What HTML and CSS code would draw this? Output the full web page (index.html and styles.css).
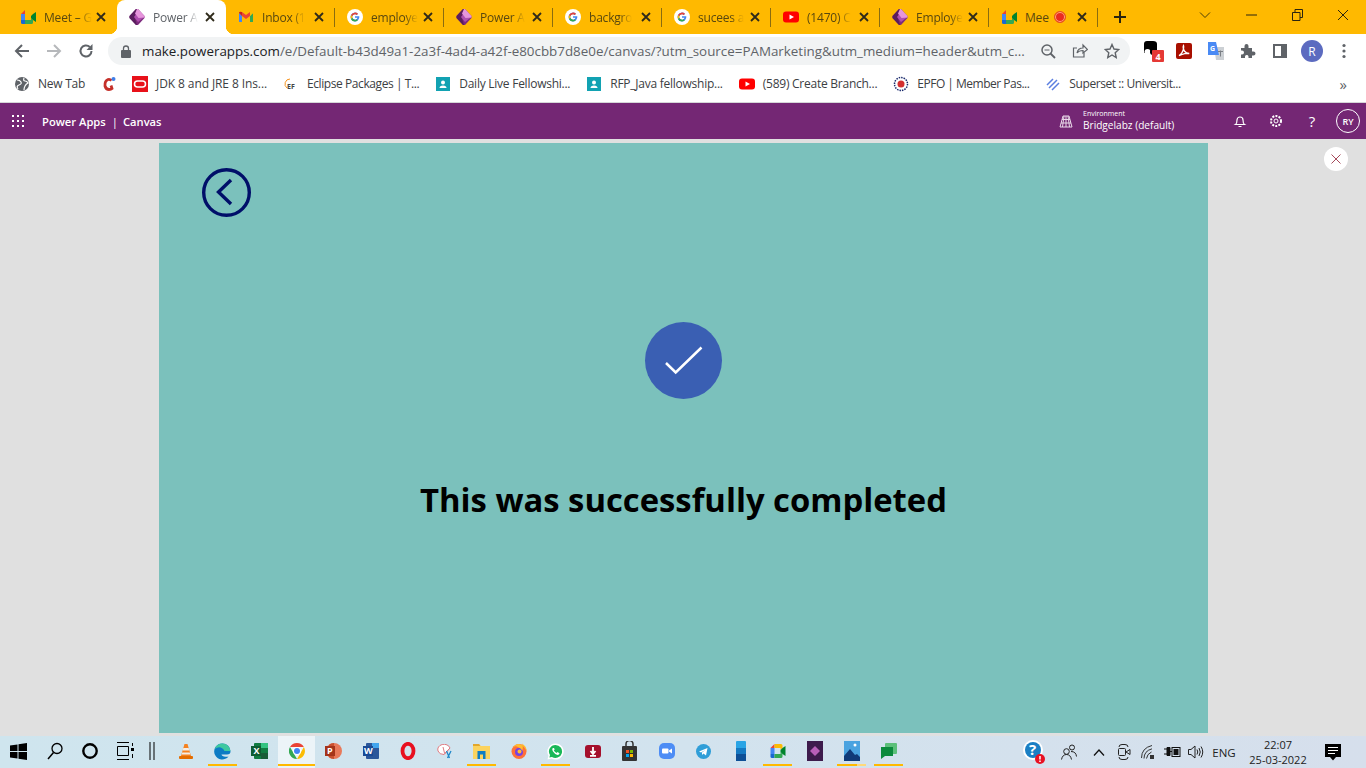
FILE: index.html
```html
<!DOCTYPE html>
<html lang="en">
<head>
<meta charset="utf-8">
<title>Power Apps</title>
<link rel="stylesheet" href="styles.css">
</head>
<body>
<svg class="defs" width="0" height="0">
  <symbol id="meet" viewBox="0 0 16 16"><path d="M1 5 5 1v4z" fill="#ea4335"/><path d="M1 5h4v6H1z" fill="#4285f4"/><path d="M1 11h4v4H2.500Q1 15 1 13.500z" fill="#1967d2"/><path d="M5 1h6.500Q13 1 13 2.500V5L11 7V5H5z" fill="#fbbc04"/><path d="M5 11h6V9l2 2v2.500Q13 15 11.500 15H5z" fill="#34a853"/><path d="M11 7l2-2 3-2v10l-3-2-2-2z" fill="#00832d"/></symbol>
  <symbol id="pa" viewBox="0 0 16 16"><path d="M7 0h2l6.500 7v2L9 16H7L.500 9V7z" fill="#7d2b7d"/><path d="M.500 7 7 0h1L5.500 8 8 16H7L.500 9z" fill="#5a1e5e"/><path d="M5 8 9 3l6.500 5L9 13z" fill="#b04fb0"/><path d="M8 0h1l6.500 7v1.500L9.500 9 6 4.500z" fill="#e695dc"/></symbol>
  <symbol id="gmail" viewBox="0 0 16 16"><path d="M1 4v9h3V7z" fill="#4285f4"/><path d="M12 7v6h3V4z" fill="#34a853"/><path d="M12 3v4l3-3q0-2-3-1z" fill="#fbbc04"/><path d="M4 3v4l4 3 4-3V3L8 6z" fill="#ea4335"/><path d="M1 4q0-2 3-1v4z" fill="#c5221f"/></symbol>
  <symbol id="g" viewBox="0 0 16 16"><circle cx="8" cy="8" r="8" fill="#fff"/><path d="M8 7.200h4.300A4.400 4.400 0 1 1 11 4.800L9.800 6A2.700 2.700 0 1 0 10.500 8.700H8z" fill="#4285f4"/><path d="M3.900 6.300A4.400 4.400 0 0 1 11 4.800L9.800 6A2.700 2.700 0 0 0 5.500 7z" fill="#ea4335"/><path d="M3.900 6.300 5.500 7a2.700 2.700 0 0 0 0 2L3.900 9.900a4.400 4.400 0 0 1 0-3.600z" fill="#fbbc04"/><path d="M3.900 9.900 5.500 9A2.700 2.700 0 0 0 9.600 10.200l1.300 1.100A4.400 4.400 0 0 1 3.900 9.900z" fill="#34a853"/></symbol>
  <symbol id="yt" viewBox="0 0 16 16"><rect y="2.500" width="16" height="11" rx="3" fill="#f00"/><path d="M6.500 5.500 11 8l-4.500 2.500z" fill="#fff"/></symbol>
  <symbol id="class" viewBox="0 0 16 16"><rect x="1" y="1" width="14" height="14" fill="#12a2b2"/><circle cx="8" cy="6.500" r="2" fill="#fff"/><path d="M4.500 12q0-2.500 3.500-2.500t3.500 2.500z" fill="#fff"/></symbol>
  <symbol id="tabx" viewBox="0 0 10 10"><path d="M1 1l8 8M9 1 1 9" stroke="#2f2a1a" stroke-width="1.800"/></symbol>
</svg>

<div class="tabstrip">
  <div class="tab"><svg class="ico"><use href="#meet"/></svg><span class="tab-title">Meet – G</span><span class="tab-x"><svg width="10" height="10"><use href="#tabx"/></svg></span></div>
  <div class="tab active"><svg class="ico"><use href="#pa"/></svg><span class="tab-title">Power A</span><span class="tab-x"><svg width="10" height="10"><use href="#tabx"/></svg></span></div>
  <div class="tab sep"><svg class="ico"><use href="#gmail"/></svg><span class="tab-title">Inbox (1</span><span class="tab-x"><svg width="10" height="10"><use href="#tabx"/></svg></span></div>
  <div class="tab sep"><svg class="ico"><use href="#g"/></svg><span class="tab-title">employe</span><span class="tab-x"><svg width="10" height="10"><use href="#tabx"/></svg></span></div>
  <div class="tab sep"><svg class="ico"><use href="#pa"/></svg><span class="tab-title">Power A</span><span class="tab-x"><svg width="10" height="10"><use href="#tabx"/></svg></span></div>
  <div class="tab sep"><svg class="ico"><use href="#g"/></svg><span class="tab-title">backgro</span><span class="tab-x"><svg width="10" height="10"><use href="#tabx"/></svg></span></div>
  <div class="tab sep"><svg class="ico"><use href="#g"/></svg><span class="tab-title">sucees a</span><span class="tab-x"><svg width="10" height="10"><use href="#tabx"/></svg></span></div>
  <div class="tab sep"><svg class="ico"><use href="#yt"/></svg><span class="tab-title">(1470) C</span><span class="tab-x"><svg width="10" height="10"><use href="#tabx"/></svg></span></div>
  <div class="tab sep"><svg class="ico"><use href="#pa"/></svg><span class="tab-title">Employe</span><span class="tab-x"><svg width="10" height="10"><use href="#tabx"/></svg></span></div>
  <div class="tab sep"><svg class="ico"><use href="#meet"/></svg><span class="tab-title short">Mee</span><span class="rec"></span><span class="tab-x"><svg width="10" height="10"><use href="#tabx"/></svg></span></div>
  <div class="newtab"><svg width="14" height="14" viewBox="0 0 14 14"><path d="M7 1v12M1 7h12" stroke="#2a2410" stroke-width="2"/></svg></div>
  <div class="winctl">
    <span class="winbtn"><svg width="12" height="8" viewBox="0 0 12 8"><path d="M1 1.500 6 6.500l5-5" fill="none" stroke="#4a3c08"/></svg></span>
    <span class="winbtn"><svg width="11" height="2" viewBox="0 0 11 2"><path d="M0 1h11" stroke="#2a2410"/></svg></span>
    <span class="winbtn"><svg width="11" height="12" viewBox="0 0 11 12"><path d="M.5 3.500h7.500v8H.5zM3 3.500V.5h7.500v8H8" fill="none" stroke="#2a2410"/></svg></span>
    <span class="winbtn"><svg width="12" height="12" viewBox="0 0 12 12"><path d="M1 1l10 10M11 1 1 11" stroke="#2a2410"/></svg></span>
  </div>
</div>

<div class="toolbar">
  <span class="navbtn"><svg width="16" height="16" viewBox="0 0 16 16"><path d="M15 8H2M8 2 2 8l6 6" fill="none" stroke="#5f6368" stroke-width="2"/></svg></span>
  <span class="navbtn"><svg width="16" height="16" viewBox="0 0 16 16"><path d="M1 8h13M8 2l6 6-6 6" fill="none" stroke="#b6b8bb" stroke-width="2"/></svg></span>
  <span class="navbtn"><svg width="16" height="16" viewBox="0 0 16 16"><path d="M13.500 8A5.500 5.500 0 1 1 11.800 4" fill="none" stroke="#5f6368" stroke-width="2"/><path d="M14.500 1v6h-6z" fill="#5f6368"/></svg></span>
  <div class="omnibox">
    <svg class="lock" width="10" height="13" viewBox="0 0 10 13"><path d="M2.500 5V3.500a2.500 2.500 0 0 1 5 0V5" fill="none" stroke="#5f6368" stroke-width="1.300"/><rect y="5" width="10" height="8" rx="1" fill="#5f6368"/></svg>
    <span class="url"><span class="host">make.powerapps.com</span>/e/Default-b43d49a1-2a3f-4ad4-a42f-e80cbb7d8e0e/canvas/?utm_source=PAMarketing&amp;utm_medium=header&amp;utm_c...</span>
    <span class="omni-ico"><svg width="16" height="16" viewBox="0 0 16 16"><circle cx="7" cy="7" r="5" fill="none" stroke="#5f6368" stroke-width="1.500"/><path d="M10.500 10.500 15 15" stroke="#5f6368" stroke-width="1.800"/><path d="M4.500 7h5" stroke="#5f6368"/></svg></span>
    <span class="omni-ico"><svg width="16" height="16" viewBox="0 0 16 16"><path d="M12 9.500V14H1.500V5H5" fill="none" stroke="#5f6368" stroke-width="1.200"/><path d="M5 10q1-5 6-5V2l4.500 4.500L11 10V7.500Q7 7.500 5 10z" fill="none" stroke="#5f6368" stroke-width="1.200"/></svg></span>
    <span class="omni-ico"><svg width="16" height="16" viewBox="0 0 16 16"><path d="M8 1.500 10 6l4.800.5-3.600 3.200 1 4.800L8 12l-4.200 2.500 1-4.800L1.200 6.500 6 6z" fill="none" stroke="#5f6368" stroke-width="1.400"/></svg></span>
  </div>
  <div class="exts">
    <span class="ext"><svg class="ext-first" width="22" height="24" viewBox="0 0 22 24"><path d="M1 5q0-3 3-3h6q4 0 4 3v9H1z" fill="#000"/><circle cx="4.500" cy="13" r="3" fill="#fff"/><circle cx="10" cy="13" r="3" fill="#000"/><rect x="9" y="11" width="12" height="12" rx="1" fill="#e53935"/><text class="badge-n" x="15" y="21">4</text></svg></span>
    <span class="ext"><svg width="16" height="16" viewBox="0 0 16 16"><rect width="16" height="16" rx="2" fill="#a80f00"/><path d="M3 12.500q3-1.500 4.500-6.500.4-2.500 0-3.500-1 2 .8 5.500 2 2.500 5 2.500-4-.3-7.300 1-2 .8-3 1z" fill="none" stroke="#fff" stroke-width="1.300"/></svg></span>
    <span class="ext"><svg width="18" height="18" viewBox="0 0 18 18"><path d="M7 5h10v13H9z" fill="#ccd0d4"/><path d="M1 0h8l3 13H1z" fill="#4a8af4"/><text class="gt" x="3" y="9">G</text><path d="M11 9.500h5M13.500 8.500v6" stroke="#7a7f85"/></svg></span>
    <span class="ext"><svg width="16" height="16" viewBox="0 0 16 16"><path d="M1 5h3.500V3a2 2 0 0 1 4 0v2H12v3.500h1.500a2 2 0 0 1 0 4H12V15H8.500v-1.500a1.800 1.800 0 0 0-3.500 0V15H1v-3.500h1a2 2 0 0 0 0-4H1z" fill="#5f6368"/></svg></span>
    <span class="ext"><svg width="14" height="14" viewBox="0 0 14 14"><path d="M1 1h12v12H1z" fill="none" stroke="#5f6368" stroke-width="2"/><path d="M8 1h5v12H8z" fill="#5f6368"/></svg></span>
    <span class="ext"><span class="avatar">R</span></span>
    <span class="ext"><svg width="4" height="16" viewBox="0 0 4 16"><circle cx="2" cy="2.500" r="1.600" fill="#5f6368"/><circle cx="2" cy="8" r="1.600" fill="#5f6368"/><circle cx="2" cy="13.500" r="1.600" fill="#5f6368"/></svg></span>
  </div>
</div>

<div class="bookmarks">
  <span class="bm"><svg class="ico"><circle cx="8" cy="8" r="7" fill="#5f6368"/><path d="M3 4q3 0 4 2t-2 3-1 4M10 2q-1 3 1 3t3 2q-2 1-3 3t-1 4" fill="none" stroke="#fff" stroke-width="1.200"/></svg><span class="bm-text">New Tab</span></span>
  <span class="bm"><svg class="ico"><path d="M10.500 4.500Q9 3 7 3.500 3.500 5 4 10q1 3.500 4 3.500 2 0 3-1l-1-3" fill="none" stroke="#c5302a" stroke-width="2.800"/><circle cx="12.500" cy="3" r="2" fill="#3f7fe8"/></svg></span>
  <span class="bm tight"><svg class="ico"><rect width="16" height="16" fill="#e8111a"/><rect x="2.500" y="5" width="11" height="6" rx="3" fill="none" stroke="#fff" stroke-width="1.500"/></svg><span class="bm-text wide">JDK 8 and JRE 8 Ins...</span></span>
  <span class="bm"><svg class="ico"><path d="M7 3A5 5 0 0 0 4 12" fill="none" stroke="#f7941e"/><text class="ef" x="4" y="13">EF</text></svg><span class="bm-text narrow">Eclipse Packages | T...</span></span>
  <span class="bm"><svg class="ico"><use href="#class"/></svg><span class="bm-text">Daily Live Fellowshi...</span></span>
  <span class="bm"><svg class="ico"><use href="#class"/></svg><span class="bm-text">RFP_Java fellowship...</span></span>
  <span class="bm"><svg class="ico"><use href="#yt"/></svg><span class="bm-text">(589) Create Branch...</span></span>
  <span class="bm"><svg class="ico"><circle cx="8" cy="8" r="6.500" fill="#fff" stroke="#1a2a6c" stroke-width="1.500" stroke-dasharray="1.500 1"/><circle cx="8" cy="8" r="3.500" fill="#d32f2f"/></svg><span class="bm-text narrower">EPFO | Member Pas...</span></span>
  <span class="bm"><svg class="ico"><path d="M2 9 8 3M4 12l8-8M7 14l7-7" fill="none" stroke="#5b7fe0" stroke-width="1.500"/></svg><span class="bm-text narrow">Superset :: Universit...</span></span>
  <span class="bm-more">»</span>
</div>

<header class="appbar">
  <svg class="waffle" width="12" height="12" viewBox="0 0 12 12"><g fill="#fff"><rect width="2" height="2"/><rect x="5" width="2" height="2"/><rect x="10" width="2" height="2"/><rect y="5" width="2" height="2"/><rect x="5" y="5" width="2" height="2"/><rect x="10" y="5" width="2" height="2"/><rect y="10" width="2" height="2"/><rect x="5" y="10" width="2" height="2"/><rect x="10" y="10" width="2" height="2"/></g></svg>
  <span class="brand">Power Apps<span class="brand-sep">|</span>Canvas</span>
  <svg class="env-ico" width="14" height="14" viewBox="0 0 14 14"><path d="M1 13 4 2h6l3 11zM2 9h10M3 5.500h8M7 2v11M5 2l-1.500 11M9 2l1.500 11" fill="none" stroke="#e9d9e9"/></svg>
  <div class="env"><span class="env-label">Environment</span><span class="env-name">Bridgelabz (default)</span></div>
  <span class="app-ico"><svg width="14" height="14" viewBox="0 0 14 14"><path d="M2.500 10.500q1.500-1 1.500-4.500a3 3 0 0 1 6 0q0 3.500 1.500 4.500zM5.500 12.500h3" fill="none" stroke="#fff" stroke-width="1.200"/></svg></span>
  <span class="app-ico"><svg width="14" height="14" viewBox="0 0 14 14"><circle cx="7" cy="7" r="2" fill="none" stroke="#fff"/><circle cx="7" cy="7" r="5" fill="none" stroke="#fff" stroke-width="2" stroke-dasharray="2 1.200"/></svg></span>
  <span class="app-ico help">?</span>
  <span class="me">RY</span>
</header>

<main class="workspace">
  <section class="stage">
    <svg class="back" width="49" height="49" viewBox="0 0 49 49"><circle cx="24.500" cy="24.500" r="22.800" fill="none" stroke="#000f69" stroke-width="3.400"/><path d="M29 12 16.500 24 29 36" fill="none" stroke="#000f69" stroke-width="3.400"/></svg>
    <div class="check"><svg width="77" height="77" viewBox="0 0 77 77"><path d="M21 41 30.700 50.500 56.500 25.500" fill="none" stroke="#fff" stroke-width="2.500"/></svg></div>
    <h1 class="message">This was successfully completed</h1>
  </section>
  <button class="dismiss" type="button" aria-label="Close"><svg width="10" height="10" viewBox="0 0 10 10"><path d="M.5.500l9 9M9.500.500l-9 9" stroke="#a64a5a"/></svg></button>
</main>

<footer class="taskbar">
  <span class="tb w36"><svg width="17" height="17" viewBox="0 0 17 17"><path d="M0 2.500 7.500 1.400V8H0zM8.500 1.200 17 0v8H8.500zM0 9h7.500v6.600L0 14.500zM8.500 9H17v8l-8.500-1.200z" fill="#000"/></svg></span>
  <span class="tb w38"><svg width="16" height="18" viewBox="0 0 16 18"><circle cx="10" cy="6.500" r="5" fill="none" stroke="#000" stroke-width="1.300"/><path d="M6.500 10.500 1 17" stroke="#000" stroke-width="1.500"/></svg></span>
  <span class="tb w32"><svg width="16" height="16" viewBox="0 0 16 16"><circle cx="8" cy="8" r="6.700" fill="none" stroke="#000" stroke-width="2.400"/></svg></span>
  <span class="tb w38"><svg width="18" height="18" viewBox="0 0 18 18"><path d="M1 .500h12M1 17.500h12M1.500 4.500h11v9h-11z" fill="none" stroke="#000"/><rect x="15" y="6" width="3" height="3" fill="#000"/><path d="M16.500 1v3M16.500 12v4" stroke="#000"/></svg></span>
  <span class="tb w16"><svg width="6" height="18" viewBox="0 0 6 18"><path d="M1 0v18M5 0v18" stroke="#000"/></svg></span>
  <div class="pins">
    <span class="tb"><svg width="14" height="17" viewBox="0 0 14 17"><path d="M5.500 1h3l3.500 12H2z" fill="#f58220"/><path d="M4.300 5h5.400l.6 2.500H3.700zM3.200 9.500h7.600l.5 2H2.700z" fill="#f4ede4"/><rect y="13" width="14" height="3" rx="1" fill="#e36d00"/></svg></span>
    <span class="tb mark"><svg width="17" height="17" viewBox="0 0 17 17"><path d="M8.500.500a8 8 0 0 1 8 8q0 3-3.500 3H7.500q.5 2 4 2.300 2 .2 3-.4A8 8 0 1 1 8.500.500z" fill="#0c7bc4"/><path d="M16.500 8Q15 .5 8.500.5 2.500.5 .800 6q3-2.500 6-1.500 3 1 3.700 3.500z" fill="#3dc8a0"/></svg></span>
    <span class="tb"><svg width="17" height="16" viewBox="0 0 17 16"><rect x="3" width="14" height="16" rx="1" fill="#107c41"/><rect x="10" width="7" height="5" fill="#33c481"/><rect x="10" y="10" width="7" height="6" fill="#185c37"/><rect y="3" width="10" height="10" fill="#0e5c33"/><text class="xl" x="2.500" y="11">X</text></svg></span>
    <span class="tb current"><svg width="16" height="16" viewBox="0 0 16 16"><path d="M8 0a8 8 0 0 1 6.900 4H8z" fill="#ea4335"/><path d="M14.900 4A8 8 0 0 1 8 16l3.500-6z" fill="#fbbc04"/><path d="M8 16A8 8 0 0 1 1 4l3.500 6z" fill="#34a853"/><path d="M1 4a8 8 0 0 1 7-4v4z" fill="#ea4335"/><circle cx="8" cy="8" r="4" fill="#fff"/><circle cx="8" cy="8" r="3" fill="#4285f4"/></svg></span>
    <span class="tb"><svg width="17" height="16" viewBox="0 0 17 16"><circle cx="9" cy="8" r="8" fill="#e8795a"/><path d="M9 0a8 8 0 0 0-5 1.800V14.200A8 8 0 0 0 9 16z" fill="#c9502f"/><path d="M0 3h10v10H0z" fill="#a5341a"/><text class="xl" x="2" y="11">P</text></svg></span>
    <span class="tb"><svg width="16" height="16" viewBox="0 0 16 16"><rect x="3" width="13" height="16" rx="1" fill="#2b579a"/><rect x="9" width="7" height="5" fill="#41a5ee"/><rect y="3" width="10" height="10" fill="#1a4a94"/><text class="xl" x="1" y="11">W</text></svg></span>
    <span class="tb"><svg width="16" height="18" viewBox="0 0 16 18"><ellipse cx="8" cy="9" rx="5.500" ry="7.200" fill="none" stroke="#e8101f" stroke-width="3.800"/></svg></span>
    <span class="tb"><svg width="16" height="15" viewBox="0 0 16 15"><path d="M1 7a6 5 0 0 1 12-3L7 10.500A6 5 0 0 1 1 7z" fill="#fff" stroke="#e07a80"/><path d="M6 3l1.500 6M7 10.500 13 4" stroke="#e07a80" fill="none"/><path d="M9.500 7l3 7M14 7l-3.500 7" stroke="#1e88c9" stroke-width="1.300"/></svg></span>
    <span class="tb mark"><svg width="17" height="16" viewBox="0 0 17 16"><path d="M0 1h6l1.500 2H17v13H0z" fill="#fbd35e"/><path d="M0 1h6l1.500 2H0z" fill="#e2a72c"/><path d="M4.500 8h8v8h-2.500v-4.500H7V16H4.500z" fill="#0f7dc2"/></svg></span>
    <span class="tb"><svg width="16" height="16" viewBox="0 0 16 16"><circle cx="8" cy="8.500" r="7.500" fill="#ff7139"/><circle cx="8" cy="9" r="4" fill="#7542e5"/><circle cx="8.500" cy="8.500" r="2" fill="#ffbd2e"/><path d="M1.500 5Q4 2 7 4q3 1 4.500 4 1-4-.5-7.500 5 3 4.500 8Q13 2 8 1 4 1 1.500 5z" fill="#ffbd2e"/></svg></span>
    <span class="tb mark"><svg width="17" height="17" viewBox="0 0 17 17"><path d="M8.500 .500A8 8 0 0 0 1.500 12.500L.500 16.500l4.100-1.100A8 8 0 1 0 8.500 .500z" fill="#fff"/><path d="M8.500 2A6.500 6.500 0 0 0 3 12l-.6 2.500 2.500-.6A6.500 6.500 0 1 0 8.500 2z" fill="#19b858"/><path d="M6 5q-1.500 1 0 3.500 2 3 4.500 3.500 2 0 2-1.800L10.500 9 9.500 10Q7.500 9 6.800 7.300l1-1L6.800 5z" fill="#fff"/></svg></span>
    <span class="tb"><svg width="16" height="13" viewBox="0 0 16 13"><rect width="16" height="13" rx="3" fill="#a5102c"/><path d="M8 2v6M5.500 6 8 9l2.500-3M5 10.800h6" fill="none" stroke="#fff" stroke-width="1.800"/></svg></span>
    <span class="tb"><svg width="15" height="20" viewBox="0 0 15 20"><path d="M4 5V3a3.500 3.500 0 0 1 7 0v2" fill="none" stroke="#333" stroke-width="1.500"/><rect y="5" width="15" height="15" rx="1" fill="#333"/><rect x="4" y="9" width="3" height="3" fill="#f25022"/><rect x="8" y="9" width="3" height="3" fill="#7fba00"/><rect x="4" y="13" width="3" height="3" fill="#00a4ef"/><rect x="8" y="13" width="3" height="3" fill="#ffb900"/></svg></span>
    <span class="tb"><svg width="16" height="16" viewBox="0 0 16 16"><rect width="16" height="16" rx="5" fill="#4d8df5"/><rect x="3" y="5.500" width="6.500" height="5" rx="1" fill="#fff"/><path d="M10 7.500 13 5.500v5L10 8.500z" fill="#fff"/></svg></span>
    <span class="tb"><svg width="15" height="15" viewBox="0 0 15 15"><circle cx="7.500" cy="7.500" r="7.500" fill="#2f9ed8"/><path d="M3 7.500 11.500 4 10 11.500 7.500 9.500 6 11V8.500l3.500-2.500-4.500 2.500z" fill="#fff"/></svg></span>
    <span class="tb"><svg width="10" height="20" viewBox="0 0 10 20"><rect width="10" height="20" rx="1" fill="#29a4e5"/><rect y="7" width="10" height="6" fill="#1579c2"/><rect y="13" width="10" height="7" fill="#0d4f96"/></svg></span>
    <span class="tb mark"><svg width="17" height="16" viewBox="0 0 17 16"><use href="#meet"/></svg></span>
    <span class="tb"><svg width="16" height="20" viewBox="0 0 16 20"><rect width="16" height="20" fill="#3d1b4c"/><path d="M8 5l5 5-5 5-5-5z" fill="#b85fb8"/></svg></span>
    <span class="tb mark half"><svg width="16" height="20" viewBox="0 0 16 20"><rect width="16" height="20" fill="#4aa3e0"/><path d="M0 20V15l6-7 5 6 2-1 3 3v4z" fill="#103a78"/><circle cx="11" cy="4" r="1.500" fill="#fff"/></svg></span>
    <span class="tb mark"><svg width="16" height="16" viewBox="0 0 16 16"><rect x="4" width="12" height="11" rx="1" fill="#5cc07a"/><path d="M0 4h12v9H4l-4 3z" fill="#0b8a3c"/></svg></span>
  </div>
  <div class="tray">
    <span class="tr w36"><svg width="24" height="26" viewBox="0 0 24 26"><circle cx="11" cy="11" r="10" fill="#fff"/><circle cx="11" cy="11" r="8" fill="#1a7fc4"/><text class="q" x="7" y="16">?</text><circle cx="18" cy="20" r="5" fill="#e81123"/><path d="M18 17v3.500M18 21.500v1.500" stroke="#fff" stroke-width="1.500"/></svg></span>
    <span class="tr w34"><svg width="16" height="16" viewBox="0 0 16 16"><circle cx="5.500" cy="7.500" r="2.800" fill="none" stroke="#222"/><path d="M.500 15.500q1-5 5-5t5 5" fill="none" stroke="#222"/><circle cx="11" cy="3.500" r="2.500" fill="none" stroke="#222"/><path d="M10 7.500q5 0 5.500 5" fill="none" stroke="#222"/></svg></span>
    <span class="tr w26"><svg width="12" height="7" viewBox="0 0 12 7"><path d="M1 6.500 6 1l5 5.500" fill="none" stroke="#111" stroke-width="1.300"/></svg></span>
    <span class="tr w24"><svg width="14" height="16" viewBox="0 0 14 16"><path d="M2 3Q2 .500 5 .500h3q3 0 3 2.500M2 13q0 2.500 3 2.500h3q3 0 3-2.500" fill="none" stroke="#222"/><rect x="1.500" y="4.500" width="7" height="7" rx="1" fill="none" stroke="#222"/><path d="M9 8l4-2.500v5z" fill="none" stroke="#222"/></svg></span>
    <span class="tr w24"><svg width="14" height="14" viewBox="0 0 14 14"><path d="M.500 13Q.5 3 11 .500M3 13.500Q3 6 11 3.800M5.500 13.500Q6 9 10.500 7" fill="none" stroke="#333"/><path d="M9 10h4v4H9z" fill="#333"/></svg></span>
    <span class="tr w24"><svg width="17" height="10" viewBox="0 0 17 10"><path d="M0 2h3M0 7h3M3 .500h3v8H3zM6 4.500h2" stroke="#111" fill="#111"/><rect x="8" y=".500" width="8" height="9" fill="none" stroke="#111"/><rect x="9.500" y="2" width="5" height="6" fill="#111"/></svg></span>
    <span class="tr w23"><svg width="16" height="14" viewBox="0 0 16 14"><path d="M.500 4.500h2.500L7 1v12L3 9.500H.500z" fill="none" stroke="#222"/><path d="M9 4.500q1.500 2.500 0 5M11 3q2.500 4 0 8M13 1.500q3.500 5.500 0 11" fill="none" stroke="#222"/></svg></span>
    <span class="tr w34 tray-text">ENG</span>
    <span class="clock"><span>22:07</span><span>25-03-2022</span></span>
    <span class="tr notif"><svg width="16" height="17" viewBox="0 0 16 17"><path d="M0 0h16v13h-5l-3 3.500L5 13H0z" fill="#000"/><path d="M3 3.500h10M3 6.500h10M3 9.500h7" stroke="#fff"/></svg></span>
  </div>
</footer>
</body>
</html>
```
FILE: styles.css
```css
* { box-sizing: border-box; }
html, body { margin: 0; height: 100%; }
body {
  width: 1366px;
  height: 768px;
  overflow: hidden;
  display: flex;
  flex-direction: column;
  font-family: "Open Sans", "Noto Sans", sans-serif;
  background: #e0e0e0;
}
.defs { position: absolute; }
.ico { width: 16px; height: 16px; flex: none; }

/* tab strip */
.tabstrip {
  height: 34px;
  flex: none;
  display: flex;
  align-items: stretch;
  padding-left: 8px;
  background: #ffb900;
}
.tab {
  position: relative;
  width: 109px;
  flex: none;
  display: flex;
  align-items: center;
  padding: 0 11px 0 12px;
  font-size: 12px;
  color: #59480f;
}
.tab.sep::after {
  content: "";
  position: absolute;
  right: 0;
  top: 8px;
  height: 19px;
  width: 1px;
  background: #8a6c10;
}
.tab.active {
  background: #fff;
  color: #5f6368;
  border-radius: 8px 8px 0 0;
}
.tab.active::before,
.tab.active::after {
  content: "";
  position: absolute;
  bottom: 0;
  width: 8px;
  height: 8px;
}
.tab.active::before { left: -8px; background: radial-gradient(circle at 0 0, transparent 8px, #fff 8.500px); }
.tab.active::after { right: -8px; background: radial-gradient(circle at 100% 0, transparent 8px, #fff 8.500px); }
.tab-title {
  margin-left: 8px;
  white-space: nowrap;
  letter-spacing: -.2px;
  -webkit-mask-image: linear-gradient(90deg, #000 72%, transparent 100%);
  mask-image: linear-gradient(90deg, #000 72%, transparent 100%);
}
.tab-title.short { -webkit-mask-image: none; mask-image: none; }
.rec {
  width: 12px;
  height: 12px;
  margin-left: 5px;
  flex: none;
  border-radius: 50%;
  background: #ea2c20;
  border: 1px solid #e8501f;
  box-shadow: inset 0 0 0 1px #ffb080;
}
.tab-x {
  margin-left: auto;
  display: flex;
  flex: none;
}
.newtab { width: 44px; display: flex; align-items: center; justify-content: center; }
.winctl { margin-left: auto; display: flex; }
.winbtn { width: 46px; display: flex; align-items: center; justify-content: center; padding-bottom: 4px; }

/* toolbar */
.toolbar {
  height: 34px;
  flex: none;
  display: flex;
  align-items: center;
  padding-left: 6px;
  background: #fff;
}
.navbtn { width: 32px; display: flex; justify-content: center; }
.omnibox {
  width: 1022px;
  height: 28px;
  margin-left: 6px;
  display: flex;
  align-items: center;
  padding-left: 13px;
  border-radius: 14px;
  background: #f1f3f4;
}
.url {
  margin-left: 11px;
  width: 890px;
  flex: none;
  white-space: nowrap;
  font-size: 13.380px;
  color: #5f6368;
}
.host { color: #202124; }
.omni-ico { width: 32px; flex: none; display: flex; justify-content: center; }
.exts { display: flex; margin-left: 6px; align-items: center; }
.ext { width: 32px; display: flex; justify-content: center; align-items: center; }
.ext-first { margin-left: 3px; }
.badge-n { font: 700 9px "Open Sans", sans-serif; fill: #fff; text-anchor: middle; }
.gt { font: 700 7px "Open Sans", sans-serif; fill: #fff; }
.avatar {
  width: 22px;
  height: 22px;
  border-radius: 50%;
  background: #5c6bc0;
  color: #fff;
  font-size: 12px;
  display: flex;
  align-items: center;
  justify-content: center;
}

/* bookmarks */
.bookmarks {
  height: 35px;
  flex: none;
  display: flex;
  align-items: center;
  gap: 16px;
  padding: 0 0 3px 14px;
  background: #fff;
  border-bottom: 1px solid #d5d6d8;
}
.bm { display: flex; align-items: center; gap: 8px; flex: none; font-size: 12px; color: #3c4043; }
.bm.tight { margin-left: -1px; }
.bm-text { white-space: nowrap; letter-spacing: -.25px; }
.bm-text.wide { letter-spacing: -.1px; }
.bm-text.narrow { letter-spacing: -.42px; }
.bm-text.narrower { letter-spacing: -.5px; }
.ef { font: 700 7px "Open Sans", sans-serif; fill: #444; }
.bm-more { margin-left: auto; margin-right: 19px; font-size: 15px; line-height: 18px; color: #5f6368; }

/* power apps bar */
.appbar {
  height: 36px;
  flex: none;
  display: flex;
  align-items: center;
  padding-left: 12px;
  color: #fff;
  background: #742774;
}
.waffle { flex: none; }
.brand { margin-left: 18px; font-size: 11.200px; font-weight: 600; white-space: nowrap; }
.brand-sep { margin: 0 5px 0 6px; font-weight: 400; }
.env-ico { margin-left: auto; }
.env { margin-left: 10px; width: 139px; display: flex; flex-direction: column; }
.env-label { font-size: 7px; line-height: 8px; }
.env-name { font-size: 10.100px; line-height: 15px; white-space: nowrap; }
.app-ico { width: 36px; flex: none; display: flex; justify-content: center; }
.help { font-size: 15px; line-height: 20px; font-weight: 400; }
.me {
  width: 24px;
  height: 24px;
  margin: 0 6px;
  flex: none;
  border: 1px solid #fff;
  border-radius: 50%;
  display: flex;
  align-items: center;
  justify-content: center;
  font-size: 9px;
  font-weight: 600;
}

/* stage */
.workspace {
  position: relative;
  height: 597px;
  flex: none;
  padding-top: 4px;
  background: #e0e0e0;
}
.stage {
  width: 1049px;
  height: 590px;
  margin-left: 159px;
  display: flex;
  flex-direction: column;
  padding: 25px 0 0 43px;
  background: #7bc1bc;
}
.back { flex: none; }
.check {
  width: 77px;
  height: 77px;
  margin: 105px 0 0 443px;
  flex: none;
  border-radius: 50%;
  background: #3a5fb3;
}
.message {
  margin: 78px 0 0 -43px;
  text-align: center;
  font-size: 32.800px;
  line-height: 45px;
  font-weight: 700;
  color: #000;
}
.dismiss {
  position: absolute;
  left: 1324px;
  top: 8px;
  width: 24px;
  height: 24px;
  padding: 0;
  border: 0;
  border-radius: 50%;
  background: #fff;
  display: flex;
  align-items: center;
  justify-content: center;
}

/* taskbar */
.taskbar {
  height: 32px;
  flex: none;
  display: flex;
  align-items: center;
  background: linear-gradient(90deg, #cfe5ee, #d2e3ee 50%, #d6dfec);
}
.pins { display: flex; margin-left: 7px; }
.tb {
  position: relative;
  width: 37px;
  height: 32px;
  flex: none;
  display: flex;
  align-items: center;
  justify-content: center;
  padding-bottom: 2px;
}
.tb.w36 { width: 36px; }
.tb.w38 { width: 38px; }
.tb.w32 { width: 32px; }
.tb.w16 { width: 16px; }
.tb.mark::after,
.tb.current::after {
  content: "";
  position: absolute;
  left: 4px;
  right: 4px;
  bottom: 2px;
  height: 2px;
  background: #ffb900;
}
.tb.current { background: #ecf4f8; }
.tb.current::after { left: 0; right: 0; }
.tb.half::after { background: linear-gradient(90deg, #ffb900 70%, #ffd97a 70%); }
.xl { font: 700 9px "Open Sans", sans-serif; fill: #fff; }
.q { font: 700 15px "Open Sans", sans-serif; fill: #fff; }
.tray { margin-left: auto; display: flex; align-items: center; color: #222; }
.tr { height: 32px; display: flex; align-items: center; justify-content: center; flex: none; }
.tr.w36 { width: 36px; }
.tr.w34 { width: 34px; }
.tr.w26 { width: 26px; }
.tr.w24 { width: 24px; }
.tr.w23 { width: 23px; }
.tray-text { font-size: 11.500px; }
.clock {
  width: 74px;
  margin-right: 3px;
  display: flex;
  flex-direction: column;
  align-items: center;
  font-size: 11px;
  line-height: 15px;
  white-space: nowrap;
}
.notif { width: 30px; margin-right: 18px; }
```
